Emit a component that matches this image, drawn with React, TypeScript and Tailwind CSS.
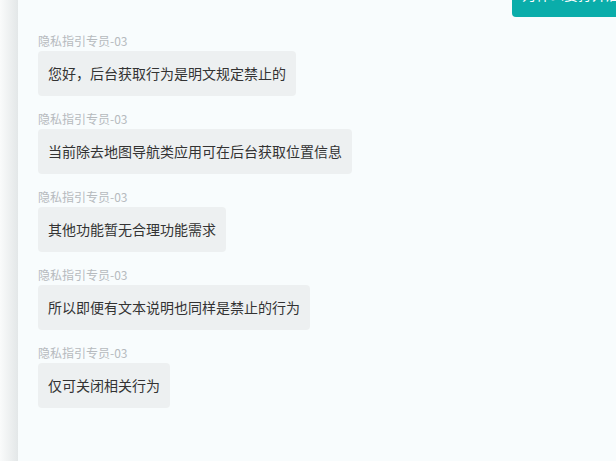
const AGENT = '隐私指引专员-03'

const MESSAGES = [
  '您好，后台获取行为是明文规定禁止的',
  '当前除去地图导航类应用可在后台获取位置信息',
  '其他功能暂无合理功能需求',
  '所以即便有文本说明也同样是禁止的行为',
  '仅可关闭相关行为',
]

function AgentMessage({ text }: { text: string }) {
  return (
    <div className="flex flex-col items-start">
      <p className="pb-1 text-[12px] leading-[13px] text-[#b6babe]">{AGENT}</p>
      <div className="rounded-[4px] bg-[#edf0f1] px-[10px] py-3 text-[14px] leading-[21px] text-[#333]">
        {text}
      </div>
    </div>
  )
}

export default function App() {
  return (
    <div
      className="flex h-[461px] w-[616px] overflow-hidden bg-[#f8fcfd]"
      style={{ fontFamily: '"Noto Sans CJK SC", "Noto Sans", sans-serif' }}
    >
      {/* side strip */}
      <div className="w-[18px] shrink-0 bg-gradient-to-r from-[#fafbfb] to-[#e3e7e8]" />

      <main className="flex min-w-0 flex-1 flex-col gap-4 px-5">
        <div className="-mt-[28px] mb-px flex justify-end -mr-[132px]">
          <div className="whitespace-nowrap rounded-[4px] bg-[#0aadaa] px-[10px] py-3 text-[14px] leading-[21px] text-white">
            为什么要打开后台获取位置信息
          </div>
        </div>
        {MESSAGES.map((m) => (
          <AgentMessage key={m} text={m} />
        ))}
      </main>
    </div>
  )
}
